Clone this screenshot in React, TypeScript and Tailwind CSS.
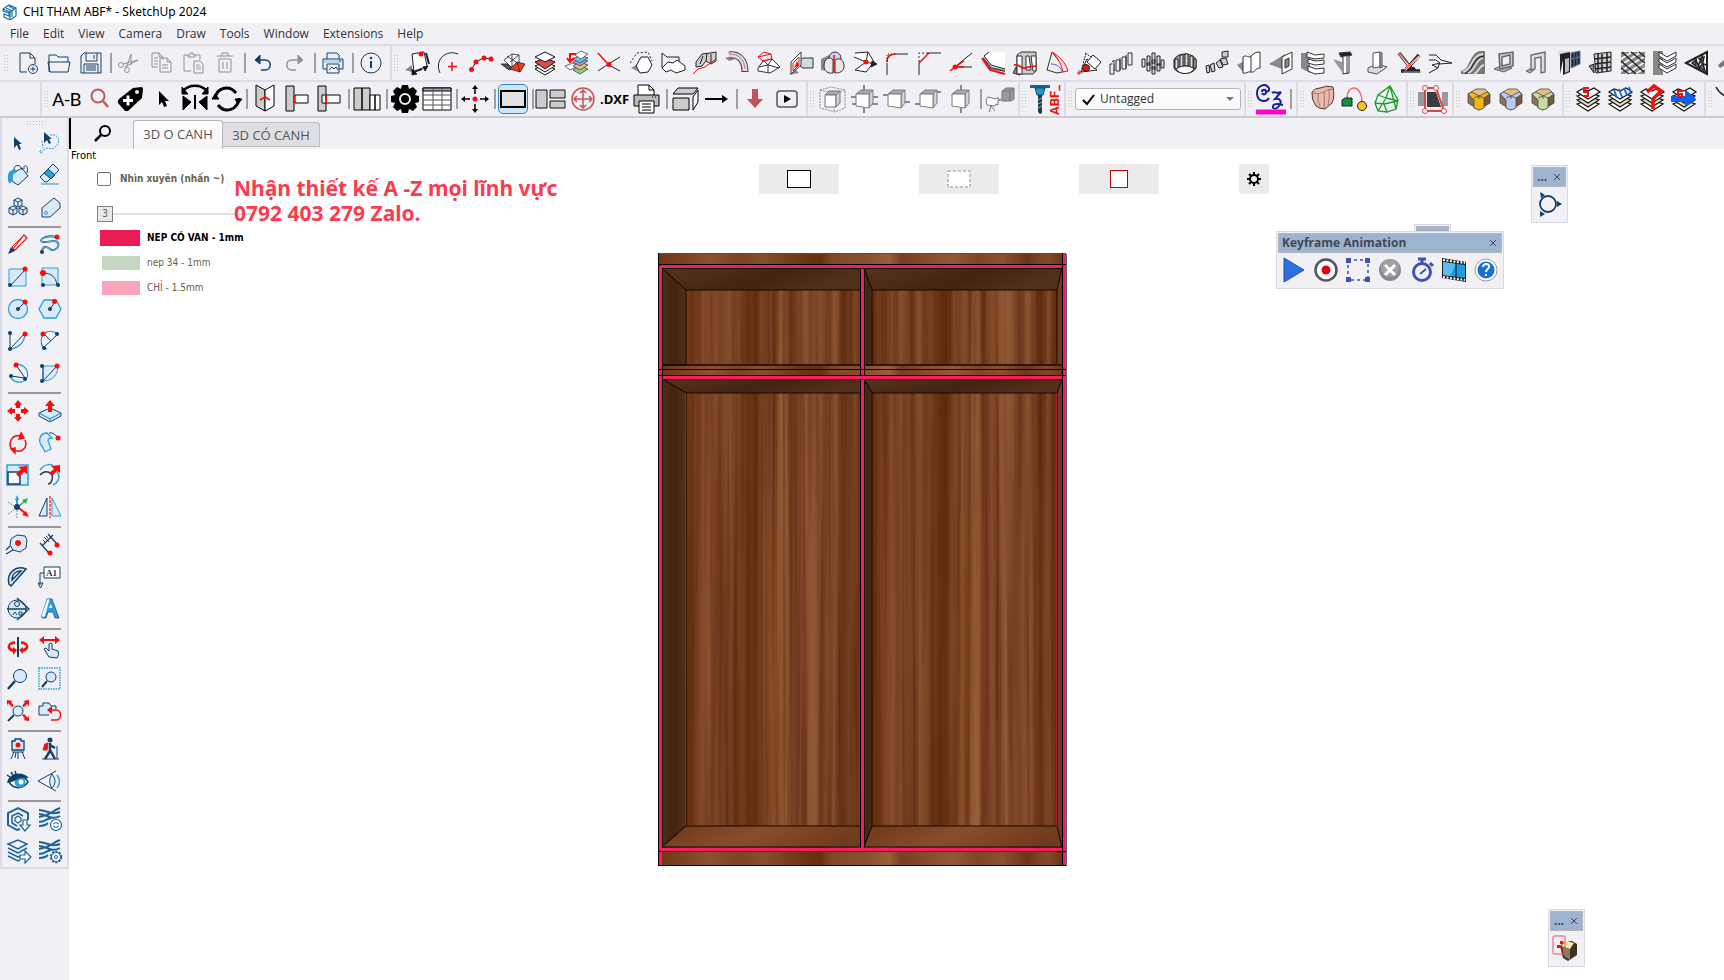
import { useState } from "react";
import type { ReactNode } from "react";

type Tool = { label: string; art: ReactNode };
// null stands for a separator line between tools
type Slot = Tool | null;

const NAVY = "#124068";
const CYAN = "#2a9fd8";
const PALE = "#d8eaf8";
const RED = "#f80c0c";
const GRAY = "#919196";

const MENUS = ["File", "Edit", "View", "Camera", "Draw", "Tools", "Window", "Extensions", "Help"];

/* ---------- small drawing helpers ---------- */

function Dot({ x, y, c = RED, r = 2.5 }: { x: number; y: number; c?: string; r?: number }) {
  return <circle cx={x} cy={y} r={r} fill={c} stroke="none" />;
}

function Cube({ lines }: { lines?: string }) {
  return (
    <g stroke="#7c7c80" strokeWidth="1">
      {lines ? <path d={lines} strokeWidth="2" stroke="#8a8a8e" /> : null}
      <path d="M6 10l5-4h12l-4 4z" fill="#aaaaad" />
      <path d="M19 10l4-4v13l-4 5z" fill="#d2d2d5" />
      <path d="M6 10h13v14l-13-2z" fill="#fff" />
    </g>
  );
}

function Block({ top }: { top: string }) {
  return (
    <g stroke="#4f4638" strokeWidth=".8">
      <path d="M4 10l11 5v11l-11-7z" fill="#8b7355" />
      <path d="M15 15l11-5v9l-11 7z" fill="#6f5c43" />
      <path d="M4 10l8-5h9l5 5-11 6z" fill="#e3bd8c" />
      <path d="M4 10l4-2 7 4 8-4 3 2-6 4v10l-5 2-5-2v-8z" fill={top} />
      <path d="M10 14l5-2 5 2M15 12v3" fill="none" />
    </g>
  );
}

function Stack({ children }: { children?: ReactNode }) {
  return (
    <g stroke="#111" strokeWidth="1.2" fill="#fff">
      <path d="M3 20l11-4 11 4-11 7z" />
      <path d="M3 16l11-4 11 4-11 7z" fill="#e3d9bd" />
      <path d="M3 12l11-4 11 4-11 7z" />
      <path d="M3 8l5-3 6 2 6-3 6 4-12 7z" />
      {children}
    </g>
  );
}

/* ---------- first toolbar row ---------- */

const FILE_TOOLS: Slot[] = [
  { label: "New", art: <g stroke={NAVY}><path d="M12 21H5V2h10l5 5v6M15 2v5h5" /><circle cx="18" cy="18" r="4.5" /><path d="M18 15.500v5M15.500 18h5" /></g> },
  { label: "Open", art: <g stroke={NAVY}><path d="M2 21V4h7l2 2h10v5M1 11h22l-2 10H3z" /></g> },
  { label: "Save", art: <g stroke={NAVY}><path d="M5 2h17v20H2V5zM7 2v8h11V2M15 4v4M5 22v-9h14v9M7 15h10M7 17h10M7 19h10" /></g> },
  null,
  { label: "Cut", art: <g stroke={GRAY}><circle cx="4" cy="14" r="2.500" /><circle cx="10" cy="19" r="2.500" /><path d="M6 13l15-4-13 7M9 17l5-14v11" /></g> },
  { label: "Copy", art: <g stroke={GRAY}><path d="M9 16H3V2h7l4 4v3M10 2v4h4M11 21V7h7l4 4v10zM18 7v4h4M5 7h4M5 10h4M5 13h4M13 14h6M13 17h6" /></g> },
  { label: "Paste", art: <g stroke={GRAY}><path d="M10 20H3V4h4M13 4h6v5M7 6V4h2V2h3v2h2v2zM13 22V10h6l3 3v9z" /><path d="M15 13h3l2 2v4h-5z" fill="#cbcbd2" stroke="none" /></g> },
  { label: "Delete", art: <g stroke={GRAY}><path d="M4 5h16M9 5V2h6v3M6 8h12v13H6zM10 11v7M14 11v7" /></g> },
  null,
  { label: "Undo", art: <g stroke={NAVY}><path d="M4 9h10c7 0 7 10 0 10h-4" strokeWidth="1.500" /><path d="M9 4L4 9l5 4z" fill={NAVY} /></g> },
  { label: "Redo", art: <g stroke={GRAY}><path d="M19 9H9C2 9 2 19 9 19h4" strokeWidth="1.500" /><path d="M15 4l5 5-5 4z" fill={GRAY} /></g> },
  null,
  { label: "Print", art: <g stroke={NAVY}><path d="M6 8V2h10l2 2v4M2 8h20v10h-4M6 18H2V8M6 13h12v9H6zM8 19l3-3 2 2 2-2 2 3" /><path d="M3 9h18v3H3z" fill="#b9d8ec" stroke="none" /><path d="M18 10h2" /></g> },
  null,
  { label: "Model Info", art: <g stroke={NAVY}><circle cx="12" cy="12" r="10" /><path d="M12 10v7" strokeWidth="2" /><Dot x={12} y={7} c={NAVY} r={1.300} /></g> },
];

const SHAPE_TOOLS: Slot[] = [
  { label: "Rotate face", art: <g stroke="#222"><path d="M0 19l7-5v7z" fill="#888" stroke="none" /><path d="M7 3l12-2 3 14-13 6z" fill="#fff" /><Dot x={16} y={3} /><path d="M21 2l3 11M8 21l9-3" strokeWidth="2" /><path d="M7 18l5 5-5 1zM18 16l5-1-3 5z" fill="#111" /></g> },
  { label: "Arc by center", art: <g stroke="#222"><path d="M21 3C9-2-3 9 3 22" /><path d="M15 11v9M11 15.500h9" stroke={RED} strokeWidth="1.500" /></g> },
  { label: "Polyline", art: <g stroke="#222"><path d="M2 19l5-8 7-4 9 1" /><Dot x={2.500} y={18.500} /><Dot x={7} y={11} /><Dot x={15} y={7} /><Dot x={22} y={8} /></g> },
  { label: "Unfold", art: <g stroke="#222" strokeWidth=".8"><path d="M3 9l8-6 7 1 0 9-8 3z" fill="#fff" /><path d="M6 5l12 8M18 4L9 11M11 3v12" /><path d="M0 13h7l5 5-4 1z" fill="#555" /><path d="M9 18l7-7 8 2-5 8z" fill="#f33a1e" /><path d="M16 11l3 10" /></g> },
  { label: "Layer stack", art: <g stroke="#111"><path d="M2 18l10-4 10 4-10 6z" fill="#fff" /><path d="M2 15l10-4 10 4-10 6z" fill="#fff" /><path d="M2 11l10-4 10 4-10 7z" fill="#e34848" /><path d="M2 6l10-5 10 5-10 5z" fill="#fff" /></g> },
  { label: "Color stack", art: <g stroke="#444" strokeWidth=".8"><path d="M0 15l8-3 5 3-8 4z" fill="#fff" /><path d="M8 19l7-4 8 3-8 5z" fill="#86d286" /><path d="M8 15l7-4 8 3-8 5z" fill="#f4b973" /><path d="M8 11l7-4 8 3-8 5z" fill="#b193e6" /><path d="M8 8l7-4 8 3-8 5z" fill="#62c8dd" /><path d="M10 4l6-4 7 3-7 5z" fill="#fff" /><path d="M11 3H5v7M2 7l3 4 4-4" stroke={RED} strokeWidth="2" /></g> },
  { label: "Intersect", art: <g stroke="#222"><path d="M1 20l9-6 13-8M12 14l11 6" /><path d="M1 2l10 11" stroke={RED} strokeWidth="1.500" /><Dot x={12} y={13.500} /></g> },
  { label: "Offset polygon", art: <g stroke="#222"><path d="M2 17l9 4-2-8z" fill="#888" stroke="none" /><path d="M12 6h7l4 8-4 7-8 1-4-7z" fill="#fff" /><path d="M1 12L8 2l11-1 4 9" strokeDasharray="2 2" /></g> },
  { label: "Sheet profile", art: <g stroke="#222"><path d="M1 17V2l5 4h12v5" /><path d="M1 17l6-6 5 1 4-3 8 6v4l-9 3-5-3-5 2z" fill="#fff" /></g> },
  { label: "Profile path", art: <g stroke="#222"><path d="M3 11l6-8 8-1 6-1v9l-5 3-5-3-4 5-6 1z" fill="#cfcfcf" /><path d="M7 13l3-8M13 10l1-8M18 12V3" /><path d="M0 23l5-5 7-2 11-8" stroke={RED} /></g> },
  { label: "Pipe bend", art: <g><path d="M0 7l7-2 3 3-6 2z" fill="#888" /><path d="M4 4c9-1 16 4 16 17" stroke="#444" strokeWidth="7" /><path d="M4 4c9-1 16 4 16 16" stroke="#ddd" strokeWidth="5" /><path d="M4 3c10 0 15 5 16 15" stroke="#c66ab0" /></g> },
  { label: "Dome", art: <g stroke="#333"><path d="M1 17l5-7 9-2 8 8-10 6-12-2z" fill="#fff" /><path d="M2 16l9-2 11 3M7 10l4 4 4-6M11 14v8" /><path d="M1 6l6-5 7 2 1 5-9 2zM1 6l13-3" stroke={RED} /></g> },
  { label: "Project to plane", art: <g stroke="#333"><path d="M0 24l6-6 4 4z" fill="#888" stroke="none" /><path d="M14 7h10v10H14l-3-2V9z" fill="#cfd9e2" /><path d="M2 11L12 1v13L2 23z" fill="#fff" /><path d="M4 12l6-6v8l-6 6z" stroke={RED} /><path d="M5 17l3-7 2 4z" fill={RED} stroke="none" /></g> },
  { label: "Sphere cut", art: <g stroke="#333"><path d="M0 19V8l8-4 6 17z" fill="#888" stroke="none" /><circle cx="14" cy="7" r="6" fill="#cdd3ea" /><path d="M3 15c0-8 6-10 9-6v13c-5 1-9-2-9-7zM14 22V9c5-3 9 0 9 6s-5 7-9 7z" fill="#e8e8e8" /><path d="M13 4v18" stroke={RED} strokeWidth="1.500" /></g> },
  { label: "Path solid", art: <g stroke="#222"><path d="M2 2l13-1 6 10-8 10-11-2 11-8L1 6" fill="#fff" /><path d="M15 1l-2 10 8 2" /><Dot x={13} y={11} /><path d="M19 10l5 3-6 3z" fill="#222" /></g> },
  { label: "Round corner", art: <g stroke="#222"><path d="M2 24V12M11 3h12" /><path d="M2 11c0-6 3-8 9-8" stroke={RED} strokeWidth="1.700" /><path d="M2 11V3h9" strokeDasharray="1 2" /></g> },
  { label: "Chamfer corner", art: <g stroke="#222"><path d="M2 24V12M11 2h13" /><path d="M2 12L12 2" stroke={RED} strokeWidth="1.500" /><path d="M2 11V2h9" strokeDasharray="2 2" /></g> },
  { label: "Angle trim", art: <g stroke="#222"><path d="M7 15l16-13M7 16h16" /><path d="M1 20l5-4 9-6M6 16h9" stroke={RED} strokeWidth="1.500" /><Dot x={6} y={16} /></g> },
  { label: "Edge sweep", art: <g stroke="#222"><path d="M8 1h16v17l-14-4-6-8z" fill="#fff" stroke="none" /><path d="M2 7l8 10 14 3" strokeWidth="2" stroke="#555" /><path d="M8 1L3 5l7 9 14 4" /><path d="M1 7l8 12 15 4" stroke={RED} strokeWidth="2" /></g> },
  { label: "Section band", art: <g stroke="#333"><path d="M0 22l3-6 4 8z" fill="#888" /><path d="M4 4l4-3h15v19l-3 3H4z" fill="#ccc" /><path d="M4 5h5v18H4zM13 5h3l2 14h-5zM18 5h5v15h-3z" fill="#fff" /><path d="M1 14c6-1 7 4 11 3s6-2 12-2" stroke={RED} strokeWidth="1.700" /></g> },
  { label: "Curved fin", art: <g stroke="#333"><path d="M2 19L7 1l15 19-10 2z" fill="#eee" /><path d="M7 1c7 7 9 12 11 20l5-1C20 11 15 6 7 1z" stroke={RED} fill="#f7e6e6" /><path d="M6 13c5 0 9 2 11 7" stroke="#4657e0" /></g> },
  { label: "Tilt face", art: <g stroke="#222"><path d="M4 21l6-13 10 11z" fill="#fff" /><path d="M8 2l16 10M4 21l5-19" strokeDasharray="2 1" /><path d="M10 11l6-7 8 7-6 7z" fill="#fff" /><circle cx="9" cy="17" r="3.500" fill={RED} /><path d="M2 19v5M0 22h5" stroke={RED} /></g> },
  { label: "Pillars", art: <g stroke="#333" fill="#eee"><path d="M1 13h4v10H1zM7 9h4v11H7zM13 6h4v12h-4zM19 2h4v12h-4z" /><path d="M3 11l2-2v11M11 7v12M17 4v13" /></g> },
  { label: "Pillar grid", art: <g stroke="#222" fill="#ddd"><path d="M1 8h3v8H1zM6 5h3v9H6zM11 2h3v10h-3zM16 5h3v9h-3zM6 12h3v8H6zM11 9h3v9h-3zM20 9h3v8h-3zM11 16h3v7h-3zM16 13h3v7h-3z" /></g> },
  { label: "Pillar ring", art: <g stroke="#222" fill="#ddd"><path d="M1 9C4 1 20 1 23 9v8c-3 7-19 7-22 0z" fill="#999" /><path d="M2 8h3v10H2zM7 4h3v12H7zM12 3h3v12h-3zM17 5h3v12h-3zM21 8h2v9h-2z" /><path d="M3 18c5-4 14-4 18 0-3 6-15 6-18 0z" fill="#fff" /></g> },
  { label: "Pillar path", art: <g stroke="#222" fill="#ccc"><path d="M1 15l3-1 1 7-3 1zM5 14l4-2 1 8-3 1zM11 12l4-3 3 7-4 1zM15 8l6-1 2 6-5 1zM17 1l6-1v6h-6z" /></g> },
  { label: "Bend sheet", art: <g stroke="#333"><path d="M0 14l7-4v12z" fill="#888" stroke="none" /><path d="M6 6c4-3 5 2 8-1s5-4 9-4v16c-5 0-5 5-9 4s-4 2-8 1z" fill="#fff" /><path d="M14 5v16" /></g> },
  { label: "Wall opening", art: <g stroke="#333"><path d="M0 13L16 3v16z" fill="#888" stroke="none" /><path d="M13 6l10-5v17l-10 5z" fill="#fff" /><path d="M16 9l4-2v8l-4 2z" fill="#888" /></g> },
  { label: "Louvers", art: <g stroke="#333"><path d="M0 2h9v20l-9-5z" fill="#888" stroke="none" /><path d="M6 1l8 3 9-1v4l-9 1-8-2zM7 8l8 2 8-1v4l-9 1-7-2zM7 15l8 3 8-1v5l-9 1-7-3z" fill="#fff" /></g> },
  { label: "Column", art: <g stroke="#333"><path d="M0 8l9 3v10z" fill="#999" stroke="none" /><path d="M6 2l11-1 2 3-11 2z" fill="#222" /><path d="M10 5h6v17l-6 1z" fill="#fff" /><path d="M14 6v16" /></g> },
  { label: "Post base", art: <g stroke="#555"><path d="M3 17l9-4 10 3-10 7-9-2z" fill="#ddd" /><path d="M8 2l7-1v15l-7 1z" fill="#fff" /><path d="M15 1l2 1v14l-2 1z" fill="#aaa" /></g> },
  { label: "Crossing beams", art: <g stroke="#222"><path d="M2 2l11 14q2 3 5 1M22 4L8 20M4 20h19" strokeWidth="3.500" /><path d="M2 2l11 14M22 5L8 19" strokeWidth="2" stroke="#fbeaea" /><path d="M2 2l13 15M22 4L8 19" stroke={RED} /><path d="M6 21h18" stroke="#999" /></g> },
  { label: "Notch line", art: <g stroke="#222"><path d="M0 4h7l5 5 11 3-13 1-1 4-9 5M0 9h7l4 3-8 2 6 3" strokeLinejoin="round" /></g> },
  { label: "Ramp", art: <g><path d="M0 20C10 18 8 1 20 0h4v23H0z" fill="#777" /><path d="M2 21C12 18 10 4 22 3M7 22c8-3 7-13 15-15M13 23c6-3 5-8 10-9" stroke="#ddd" strokeWidth="1.800" /><path d="M4 23C14 18 11 6 23 5" stroke="#222" /></g> },
  { label: "Frame", art: <g stroke="#666"><path d="M1 18l6-3 12 2-8 4z" fill="#aaa" /><path d="M6 3l14-2v14l-13 3z" fill="#ccc" strokeWidth="1.500" /><path d="M9 6l8-2v9l-8 2z" fill="#f0f0f5" strokeWidth="1.500" /></g> },
  { label: "Door frame", art: <g stroke="#666"><path d="M1 20l6-3 2 2-4 3z" fill="#aaa" /><path d="M6 19V4l14-3v20l-4 1V6L10 7v11z" fill="#ddd" strokeWidth="1.300" /></g> },
  { label: "Facade", art: <g><path d="M1 0h22v5H1z" fill="#ddd" /><path d="M3 3l10-2v20l-7 3V9L3 23z" fill="#222" /><path d="M8 8l4-1v13l-4 2z" fill="#bbb" /><path d="M14 2l9-2v13l-9 4zM14 8l9-2M17 2v13M20 2v12" stroke="#6a7c9c" fill="#1b2433" /></g> },
  { label: "Lattice window", art: <g stroke="#222"><path d="M0 15l5-2v9z" fill="#888" /><path d="M5 3l17-2v19l-15 2z" fill="#ccc" /><path d="M9 3v18M13 3v18M18 2v18M5 8l17-2M6 13l16-2M6 18l16-2" strokeWidth="1.500" /></g> },
  { label: "Diagonal mesh", art: <g><path d="M0 1h24v22H0z" fill="#888" /><path d="M0 8l11-7M0 14L20 1M0 20L24 5M5 23l19-12M14 23l10-6" stroke="#f8f8f8" strokeWidth="1.800" /><path d="M1 1l22 20M10 1l14 11M0 10l15 13M0 17l8 6M18 1l6 5" stroke="#222" strokeWidth="1.500" /></g> },
  { label: "Chevron slats", art: <g stroke="#333"><path d="M0 0h10v24H0z" fill="#888" stroke="none" /><path d="M6 1l8 5 9-5v4l-9 5-8-5zM6 7l8 5 9-5v4l-9 5-8-5zM6 13l8 5 9-5v4l-9 5-8-5z" fill="#fff" /></g> },
  { label: "Wedge lattice", art: <g stroke="#222" strokeWidth="1.500"><path d="M1 12L22 1v22z" fill="#fff" strokeWidth="2" /><path d="M7 12l4-3v6zM14 8l5-2-1 5zM14 16l4-3 2 7z" fill="#777" /><path d="M10 6l5 13M18 3l-6 15M15 11l8 4" /></g> },
  { label: "Roof", art: <g><path d="M1 14L14 3l10 8v12L10 13l-7 4z" fill="#777" /></g> },
];

/* ---------- second toolbar row, drawn on a 30 unit grid ---------- */

const ABF_TOOLS: Slot[] = [
  { label: "Label A-B", art: <text x="0" y="22" fontSize="19" fontFamily="Roboto, sans-serif" fill="#000">A-B</text> },
  { label: "Find", art: <g stroke="#c05558" strokeWidth="2"><circle cx="14" cy="12" r="6.500" /><path d="M19 17l5 6" strokeWidth="2.500" /></g> },
  { label: "Add tag", art: <g><path d="M3 15L17 4l9-1 1 2-1 9-14 13H9L2 19q-1-2 1-4z" fill="#000" /><circle cx="21" cy="8" r="2" fill="#f0f0f5" /><path d="M12 11.500v10M7 16.500h10" stroke="#fff" strokeWidth="3" /></g> },
  { label: "Select", art: <path d="M11 7v14l3-3 2 5 3-1-2-5h4z" fill="#000" /> },
  { label: "Mirror", art: <g stroke="#000"><path d="M3 7c6-7 18-7 24 0" strokeWidth="2.500" /><path d="M2 3v7h6zM28 3v7h-6z" fill="#000" /><path d="M15 11v14" strokeWidth="2" /><path d="M3 12l8 6-8 8zM27 12l-8 6 8 8z" fill="#000" /></g> },
  { label: "Rotate", art: <g stroke="#000" strokeWidth="3"><path d="M3 15C4 4 17 0 24 9M27 14C26 26 13 30 6 21" /><path d="M0 15h7l-4-5zM23 15h7l-4 5z" fill="#000" strokeWidth="1" /></g> },
  null,
  { label: "Fold panel", art: <g stroke="#000" strokeWidth="1"><path d="M6 1l9 5v21l-9-5z" fill="#ccc" /><path d="M24 1l-9 5v21l9-5z" fill="#fff" /><path d="M10 16l5-3 5 3" stroke={RED} strokeWidth="1.800" /></g> },
  { label: "Joint face", art: <g stroke="#000"><path d="M4 2h8v25H4z" fill="#ccc" /><path d="M13 11h13v8H13z" fill="#fff" /><path d="M12 11v8" stroke={RED} strokeWidth="2" /></g> },
  { label: "Joint groove", art: <g stroke="#000"><path d="M4 2h8v25H4z" fill="#ccc" /><path d="M8 11h18v8H8z" fill="#fff" /><path d="M12 11v8" stroke={RED} strokeWidth="2" /></g> },
  null,
  { label: "Panels", art: <g stroke="#000"><path d="M2 4h8v22H2zM10 4h8v22h-8z" fill="#ccc" /><path d="M18 11h5v15h-5zM23 11h5v15h-5z" fill="#fff" /></g> },
  null,
  { label: "Settings", art: <g><path d="M12 1h6l1 4 4-2 4 4-2 4 4 1v6l-4 1 2 4-4 4-4-2-1 4h-6l-1-4-4 2-4-4 2-4-4-1v-6l4-1-2-4 4-4 4 2z" fill="#000" /><circle cx="15" cy="15" r="5" stroke="#f0f0f5" strokeWidth="2" /></g> },
  { label: "Table", art: <g stroke="#000"><path d="M1 4h28v22H1z" fill="#fff" /><path d="M1 4h28v3H1z" fill="#aaa" /><path d="M1 11h28M1 16h28M1 21h28M11 4v22M20 4v22" stroke="#555" /></g> },
  null,
  { label: "Move origin", art: <g stroke="#000" strokeWidth="1.500"><path d="M15 10V3M15 20v7M10 15H2M20 15h8" /><path d="M12 5l3-4 3 4zM12 25l3 4 3-4zM5 12l-4 3 4 3zM25 12l4 3-4 3z" fill="#000" stroke="none" /><Dot x={15} y={15} /></g> },
  null,
  { label: "Face mode", art: <path d="M3 7h24v16H3z" stroke="#000" strokeWidth="2" fill="#e2e2e2" /> },
  null,
  { label: "Layout", art: <g stroke="#111" fill="#ccc"><path d="M0 6h11v18H0zM14 6h15v8H14zM14 17h15v7H14z" /></g> },
  { label: "Center", art: <g stroke="#c05558" strokeWidth="1.500"><circle cx="15" cy="15" r="11" /><path d="M15 6v18M6 15h18M12 9l3-3 3 3M12 21l3 3 3-3M9 12l-3 3 3 3M21 12l3 3-3 3" /></g> },
  { label: "Export DXF", art: <text x="0" y="20" fontSize="13" fontWeight="bold" fontFamily="Open Sans, sans-serif" fill="#000">.DXF</text> },
  { label: "Print sheets", art: <g stroke="#000"><path d="M6 11V1h11l5 5v5" fill="#fff" /><path d="M17 1v5h5" /><path d="M2 11h25v11H2z" fill="#bbb" /><path d="M7 17h15v12H7zM10 20h9M10 23h9M10 26h9" fill="#fff" /><path d="M20 13h1M23 13h1" /></g> },
  null,
  { label: "Box", art: <g stroke="#000"><path d="M3 10l5-6h20l-5 6z" fill="#ccc" /><path d="M3 14h16v12H3z" fill="#ccc" /><path d="M23 13l5-7v12l-5 8z" fill="#fff" /></g> },
  { label: "Direction", art: <g><path d="M3 15h18" stroke="#000" strokeWidth="2" /><path d="M20 11l6 4-6 4z" fill="#000" /></g> },
  null,
  { label: "Download", art: <path d="M12 5h6v10h5l-8 9-8-9h5z" fill="#bf5355" /> },
  { label: "Play", art: <g><rect x="5" y="7" width="20" height="16" rx="3" stroke="#555" strokeWidth="1.500" /><path d="M12 11v8l7-4z" fill="#000" /></g> },
];

const VIEW_TOOLS: Slot[] = [
  { label: "Axes box", art: <g><path d="M2 6l11-3 14 3v18l-10 4L2 24zM2 6l14 4 11-4M16 10v18" stroke="#8d8d92" strokeDasharray="2 1" /><g stroke="#77777b"><path d="M7 11l4-4h11l-4 4z" fill="#aaa" /><path d="M7 11h11v12H7z" fill="#fff" /><path d="M18 11l4-4v12l-4 4z" fill="#d0d0d3" /></g></g> },
  { label: "Cube axes", art: <Cube lines="M14 1v28M1 13h27M2 20h26" /> },
  { label: "Cube width", art: <Cube lines="M1 11h10M18 18h10" /> },
  { label: "Cube depth", art: <Cube lines="M1 20h14M22 8h5" /> },
  { label: "Cube height", art: <Cube lines="M15 1v28" /> },
  null,
  { label: "Camera view", art: <g stroke="#77777b"><path d="M2 16l2-3 8 2 2-2v8l-2-1-1 2-8-1zM7 22l-2 6M7 22l4 5" fill="#fff" /><path d="M15 16l6-2" strokeDasharray="2 1" strokeWidth="2" /><path d="M18 7l4-3h8v11l-3 2h-9z" fill="#9a9a9d" /><path d="M18 7h8v10M26 7l4-3" /></g> },
];

const ABF_LOGO: Slot[] = [
  {
    label: "ABF",
    art: (
      <g>
        <path d="M0 1h20v3H0z" fill="#16648c" />
        <path d="M5 4h10l-2 7H7z" fill="#1e96cf" stroke="#0f4460" />
        <path d="M8 11h4v18l-2 1-2-2z" fill="#223b49" />
        <path d="M8 16l4-2M8 20l4-2M8 24l4-2" stroke="#aaa" />
        <text transform="translate(29 31) rotate(-90)" fontSize="13" fontWeight="bold" fontFamily="Roboto, sans-serif" fill="#f80c0c">ABF_</text>
      </g>
    ),
  },
];

const CZ_TOOLS: Slot[] = [
  {
    label: "Curvizard",
    art: (
      <g stroke="#1b1f94" strokeWidth="2">
        <path d="M13 4C9-2 1 2 1 9c0 9 9 10 12 5M13 4c1 4-4 5-4 1M6 8c0-3 4-3 4 0s-3 3-4 1" />
        <path d="M16 9c2-2 5 1 9-1l-6 7c6-1 7 3 4 7s-7 3-6 0 6-2 10-1" />
        <path d="M0 28h30" stroke="#fb06c4" strokeWidth="5" />
      </g>
    ),
  },
  null,
];

const SOAP_TOOLS: Slot[] = [
  { label: "Skin", art: <g stroke="#4c3530"><path d="M4 8q3-4 8-4 7-3 13-1 2 10-1 16l-7 6q-6 0-9-3-5-7-4-14z" fill="#eab9ac" /><path d="M5 9q5 2 11-1 4-3 9-3M10 9q-1 7 2 14M16 8q1 8 0 16M21 5q1 9-1 16" stroke="#a5766c" /></g> },
  { label: "Path skin", art: <g stroke="#222"><path d="M7 14C7 0 22 0 22 18" stroke="#f26862" strokeWidth="1.500" /><path d="M2 16l3-2h7v8H2z" fill="#0f9048" /><circle cx="22" cy="22" r="4.500" fill="#fdc516" /></g> },
  { label: "Wire bubble", art: <g stroke="#16a02b" strokeWidth="1.300"><path d="M3 19L6 11l12-9 8 14-2 9-9 3-9-1zM6 11l8 3 4-12M14 14l-8 13M14 14l12 3M3 19l9 1 14-3M12 20l3 8M18 2l6 23" /></g> },
];

const TAPER_TOOLS: Slot[] = [
  { label: "Taper", art: <g><path d="M0 8h6v14H0zM24 8h6v14h-6z" fill="#999" /><path d="M9 8h9l5 15H9z" fill="#3c3c3f" /><path d="M7 4h11l8 23H7z" stroke="#dc4545" strokeWidth="2" /><g fill="#fff" stroke="#dc4545"><circle cx="7" cy="4" r="2.500" /><circle cx="18" cy="4" r="2.500" /><circle cx="7" cy="27" r="2.500" /><circle cx="26" cy="27" r="2.500" /></g></g> },
];

const CORNER_TOOLS: Slot[] = [
  { label: "Round corners", art: <Block top="#f4b815" /> },
  { label: "Sharp corners", art: <Block top="#b9c9fb" /> },
  { label: "Bevel corners", art: <Block top="#c5dda3" /> },
];

const SECTION_TOOLS: Slot[] = [
  { label: "Slice", art: <Stack><path d="M15 4h-5v4h4v4h-4" stroke={RED} strokeWidth="2" fill="none" /></Stack> },
  { label: "Slice lines", art: <Stack><path d="M8 6l3 8M13 5l3 8M18 4l3 7M23 3l2 7" stroke="#1e6ee0" strokeWidth="2" /></Stack> },
  { label: "Slice help", art: <Stack><path d="M9 8l7-6 7 5-8 8v10" stroke={RED} strokeWidth="3.500" fill="none" /></Stack> },
  { label: "Slice next", art: <Stack><path d="M1 12h14V5l11 10-11 9v-6H1z" fill="#0a62f5" stroke="none" /><path d="M13 7H8v3h4v3H8" stroke={RED} strokeWidth="2" fill="none" /></Stack> },
];

const LAST_TOOLS: Slot[] = [
  { label: "Line", art: <path d="M0 3c2 4 5 7 9 9" stroke="#222" strokeWidth="1.500" /> },
];

/* ---------- left palette, two columns ---------- */

const PALETTE: Tool[][] = [
  [
    { label: "Select", art: <path d="M8 6v11l3-3 2 5 2-1-2-5h3z" fill={NAVY} /> },
    { label: "Lasso", art: <g><path d="M12 4c9-2 12 8 4 13-3 2-6-1-9 1-4 2-3 4-3 4M3 19q-3 3 1 3M4 10l1 7" stroke={CYAN} strokeDasharray="2 1" /><path d="M6 1v11l3-3 2 4 2-1-2-4h3z" fill={NAVY} /></g> },
    { label: "Paint", art: <g stroke={NAVY}><path d="M6 11l10-6 6 8-10 9-6-4z" fill={PALE} /><path d="M8 7c0-7 8-5 8 0M18 6c-1-5 5-5 3 4" /><path d="M2 16c-1-8 4-10 9-9l-4 5-2 8q-3 1-3-4z" fill={CYAN} stroke="none" /></g> },
    { label: "Eraser", art: <g stroke={NAVY}><path d="M2 14L15 1l6 6L9 19H7z" fill={PALE} /><path d="M6 10l4-4 7 6-4 4z" fill={CYAN} /><path d="M3 21h18" stroke="#7cc4ea" strokeWidth="2" /></g> },
    { label: "Components", art: <g stroke={NAVY}><path d="M12 3l4 2v5l-4 2-4-2V5zM8 5l4 2 4-2M12 7v5M7 11l4 2v5l-4 2-4-2v-5zM3 13l4 2 4-2M7 15v5M17 11l4 2v5l-4 2-4-2v-5zM13 13l4 2 4-2M17 15v5" fill={PALE} /></g> },
    { label: "Tag", art: <g stroke={NAVY}><path d="M4 13L16 3l6 5v5L12 22H4z" fill={PALE} /><circle cx="8" cy="18" r="1.500" stroke={CYAN} /></g> },
  ],
  [
    { label: "Line", art: <g><path d="M6 14L18 2l3 3L9 17z" fill="#fff" stroke={RED} /><path d="M18 2l3 3L9 17l-2-1z" stroke={RED} strokeWidth="1.200" /><path d="M2 21l3-7 4 4z" fill={NAVY} /></g> },
    { label: "Freehand", art: <g><path d="M19 4C5 1-1 9 6 9s12-3 14 1-4 9-8 6-7-3-8 2" stroke={NAVY} strokeWidth="1.800" /><path d="M19 4C5 1-1 9 6 9s12-3 14 1-4 9-8 6-7-3-8 2" stroke="#5bb5e4" strokeWidth="1.200" /><Dot x={19} y={4} /><Dot x={4} y={19} c={NAVY} r={2} /></g> },
    { label: "Rectangle", art: <g><path d="M3 4h17v17H3z" fill={PALE} stroke={CYAN} /><path d="M4 21L20 4" stroke={NAVY} /><Dot x={19} y={4} /><Dot x={4} y={20} c={NAVY} r={2} /></g> },
    { label: "Rotated rectangle", art: <g><path d="M4 3h16v17H4z" fill={PALE} stroke={CYAN} /><path d="M5 8c8 0 13 4 14 12" stroke={NAVY} /><Dot x={5} y={8} r={3} /><Dot x={5} y={20} c={NAVY} r={2} /><Dot x={20} y={20} c={NAVY} r={2} /></g> },
    { label: "Circle", art: <g><circle cx="12" cy="12" r="9.500" fill={PALE} stroke={CYAN} strokeWidth="1.300" /><path d="M12 12l7-7" stroke={NAVY} /><Dot x={19} y={5} /><Dot x={12} y={12} c={NAVY} r={2} /></g> },
    { label: "Polygon", art: <g><path d="M6 3h12l5 9-5 9H6l-5-9z" fill={PALE} stroke={CYAN} strokeWidth="1.300" /><path d="M12 12l5-7" stroke={NAVY} /><Dot x={16.500} y={4.500} /><Dot x={12} y={12} c={NAVY} r={2} /></g> },
    { label: "Arc", art: <g><path d="M19 4c0 9-6 15-15 16" stroke={CYAN} strokeWidth="1.300" /><path d="M4 4v16L19 4" stroke={NAVY} /><Dot x={19} y={5} /><Dot x={4} y={4} c={NAVY} r={2} /><Dot x={4} y={20} c={NAVY} r={2} /></g> },
    { label: "2 point arc", art: <g><path d="M5 19C-1 6 10-2 20 5M5 19l4 1" stroke={CYAN} strokeWidth="1.300" /><path d="M5 19L20 5M6 5l7 7" stroke={NAVY} /><Dot x={5} y={5} /><Dot x={19} y={5} c={NAVY} r={2} /><Dot x={6} y={19} c={NAVY} r={2} /></g> },
    { label: "3 point arc", art: <g><path d="M10 3c14 0 15 17 5 18q-6 1-10-4" stroke={CYAN} strokeWidth="1.300" /><path d="M10 4l9 13L5 15" stroke={NAVY} /><Dot x={10} y={4} /><Dot x={5} y={15} c={NAVY} r={2} /><Dot x={19} y={18} c={NAVY} r={2} /></g> },
    { label: "Pie", art: <g><path d="M5 5h15c0 9-6 15-15 15z" fill={PALE} stroke={CYAN} /><path d="M5 4v16L19 5" stroke={NAVY} /><Dot x={19} y={5} /><Dot x={4} y={5} c={NAVY} r={2} /><Dot x={4} y={20} c={NAVY} r={2} /></g> },
  ],
  [
    { label: "Move", art: <g fill={RED}><path d="M12 1l4 5h-2v3h-4V6H8zM12 23l4-5h-2v-3h-4v3H8zM1 12l5-4v2h3v4H6v2zM23 12l-5-4v2h-3v4h3v2z" /></g> },
    { label: "Push/Pull", art: <g><path d="M1 14l11-5 11 5v3l-11 6-11-6z" fill={PALE} stroke={NAVY} /><path d="M1 14l11 6 11-6M12 20v3" stroke={CYAN} strokeWidth="1.300" /><path d="M12 1l5 6h-3v6h-4V7H7z" fill={RED} /></g> },
    { label: "Rotate", art: <g stroke={RED} strokeWidth="1.500"><path d="M5 17C2 10 7 3 16 5M19 9c3 7-3 14-11 10" /><path d="M15 2l3 5-5 1zM9 17l-4 1 4 4z" fill={RED} /></g> },
    { label: "Follow Me", art: <g><path d="M9 2c-8 0-9 9-5 13l3 6 6-3-2-6c-2-3-1-5 3-5z" fill={PALE} stroke={CYAN} strokeWidth="1.300" /><path d="M11 2c5-1 6 3 9 4" stroke={NAVY} /><Dot x={20} y={7} /></g> },
    { label: "Scale", art: <g><path d="M1 2h21v20H1z" fill={PALE} stroke={CYAN} strokeWidth="1.500" /><path d="M2 9h12v12H2z" fill="#f6f9fd" stroke={NAVY} strokeWidth="1.500" /><path d="M21 3v8l-3-2-5 5-3-3 5-5-3-2z" fill={RED} /></g> },
    { label: "Offset", art: <g><path d="M2 7C7 0 14 1 15 3M19 9c5 6-1 12-4 13" stroke={CYAN} strokeWidth="1.500" /><path d="M2 12c5-6 15-3 12 5-1 3-2 4-4 4" stroke={NAVY} strokeWidth="1.500" /><path d="M22 2v8l-3-2-5 5-3-3 5-4-3-3z" fill={RED} /></g> },
    { label: "Axes", art: <g><path d="M11 12V3" stroke="#2a9fd8" strokeWidth="2" /><path d="M13 11l6-5" stroke="#3aa75a" strokeWidth="1.500" /><path d="M11 0l2 5h-4z" fill={CYAN} /><path d="M22 3l-2 6-4-4z" fill="#3aa75a" /><path d="M13 13l6 5" stroke={RED} strokeWidth="2" /><path d="M23 22l-7-2 4-4z" fill={RED} /><path d="M2 7l6 4M11 15v8M2 19l6-4" stroke="#5a8" strokeDasharray="2 1" /><Dot x={11} y={12} c={NAVY} r={3} /></g> },
    { label: "Flip", art: <g><path d="M9 3v18H1z" fill={PALE} stroke={NAVY} /><path d="M14 3v18h9z" fill={PALE} stroke={CYAN} /><path d="M12 1v22" stroke="#f56a6a" strokeWidth="2" strokeDasharray="3 1" /></g> },
  ],
  [
    { label: "Tape measure", art: <g stroke={NAVY}><path d="M5 6l6-4 8 1 2 4-1 8-6 4-7-2-3-5z" fill={PALE} /><circle cx="12" cy="10" r="4" fill="#fff" stroke="none" /><Dot x={12} y={10} r={3} /><path d="M7 17l-7 4M4 13L0 17" strokeWidth="1.200" /></g> },
    { label: "Dimension", art: <g stroke={NAVY}><path d="M2 10l9 10M4 13L15 2M10 1l9 10" strokeWidth="1.300" /><path d="M6 4l5 5M8 3l2 2M5 7l2 2" /><Dot x={12} y={20} /><Dot x={19} y={12} /></g> },
    { label: "Protractor", art: <g stroke={NAVY} strokeWidth="1.500"><path d="M3 19C0 8 10 0 20 4L5 21z" fill={PALE} /><path d="M6 15c0-6 4-9 9-9z" fill="#fff" /></g> },
    { label: "Text", art: <g><path d="M6 2h16v11H6z" fill="#fff" stroke={NAVY} /><text x="8" y="11" fontSize="9" fontFamily="Liberation Serif, serif" fill={NAVY} fontWeight="bold">A1</text><path d="M6 8H2v12M0 18l2.500 5L5 18z" stroke={NAVY} fill="none" /></g> },
    { label: "Section plane", art: <g stroke={NAVY}><circle cx="11" cy="12" r="9" fill={PALE} /><path d="M1 12h20M11 1l12 11-12 11" strokeWidth="1.300" /><circle cx="11" cy="7" r="2.500" /><path d="M7 18l2-3 2 3M13 15v3h3v-3z" /></g> },
    { label: "3D text", art: <g><path d="M4 21L9 2h5l7 19h-4l-2-6h-5l-2 6z" fill={CYAN} stroke={NAVY} strokeWidth=".7" /><path d="M3 20L9 2h3L7 20z" fill="#fff" stroke={CYAN} strokeWidth=".7" /><path d="M11 11h3l-1-4z" fill="#fff" /></g> },
  ],
  [
    { label: "Orbit", art: <g><path d="M9 6C0 7-1 15 7 17v-3q-7-4 2-5zM15 6c9 1 10 9 2 11v-3q7-4-2-5z" fill={RED} /><path d="M7 12l4 3-4 5zM17 12l-4 3 4 4z" fill={RED} /><path d="M12 2v20" stroke={NAVY} strokeWidth="2" /></g> },
    { label: "Pan", art: <g><path d="M11 22l-5-8 2-1 3 3V9q2-2 3 0v5l6 2q2 3-1 7z" fill={PALE} stroke={NAVY} /><path d="M1 5l5-4v3h11V1l5 4-5 4V6H6v3z" fill={RED} /></g> },
    { label: "Zoom", art: <g stroke={NAVY}><circle cx="14" cy="9" r="6.500" fill={PALE} /><path d="M9 14l-7 8" strokeWidth="2.500" /></g> },
    { label: "Zoom window", art: <g stroke={NAVY}><path d="M1 1h21v21H1z" stroke={CYAN} strokeDasharray="1.500 1" strokeWidth="1.500" /><circle cx="13" cy="10" r="5" fill={PALE} /><path d="M9 14l-5 6" strokeWidth="2" /></g> },
    { label: "Zoom extents", art: <g stroke={NAVY}><circle cx="12" cy="12" r="5" fill={PALE} /><path d="M8 16l-6 6" strokeWidth="2" /><path d="M1 1l6 1-2 1 3 4-2 1-4-4-1 3zM23 1l-6 1 2 1-3 4 2 1 3-3 2 2zM23 22l-6-1 2-1-3-4 2-1 4 4 1-3z" fill={RED} stroke="none" /></g> },
    { label: "Previous view", art: <g><path d="M11 16H1V7h4V4h6l2 3h5v3" stroke={NAVY} fill={PALE} /><path d="M12 11h6c6 0 6 10 0 10h-5" stroke={RED} strokeWidth="1.500" /><path d="M14 7l-5 4 5 4z" fill={RED} /></g> },
  ],
  [
    { label: "Position camera", art: <g stroke={NAVY}><path d="M6 4h3V2h6v2h3v9H6z" fill={PALE} strokeWidth="1.300" /><Dot x={12} y={8} /><path d="M6 15h12M8 15L5 22M12 15v7M16 15l3 7M10 15l-1 6" /></g> },
    { label: "Walk", art: <g stroke={NAVY}><Dot x={12} y={3} c={NAVY} r={2.500} /><path d="M12 6v8l-5 8M12 13l5 9M12 8l5 3" strokeWidth="2.500" /><path d="M10 6l-3 1-2 6h4z" fill={RED} stroke={RED} /><path d="M19 9v13M4 22h17" /></g> },
    { label: "Look around", art: <g><path d="M3 13c5-8 15-8 19 0-5 7-14 8-19 0z" fill="#fff" stroke={NAVY} strokeWidth="1.500" /><circle cx="14" cy="13" r="5.500" fill={CYAN} /><circle cx="15" cy="13" r="2.500" fill="#fff" /><path d="M1 14C3 3 17 2 23 9q-9-1-13 2-5 3-9 3z" fill={NAVY} /><path d="M4 8L1 6M7 6L5 3M10 5L9 2" stroke={NAVY} strokeWidth="1.500" /></g> },
    { label: "Field of view", art: <g stroke={NAVY}><path d="M18 2L0 12l18 10M14 5c-3 5-3 10 0 14" /><path d="M14 5c4 5 4 10 0 14" fill={PALE} /><path d="M19 6c3 4 3 9 0 13" stroke={CYAN} strokeWidth="1.500" /></g> },
  ],
  [
    { label: "Warehouse", art: <g stroke="#1c639a" strokeWidth="2"><path d="M14 22l-3 1-9-5V6l10-5 10 5v7" /><path d="M17 9l-5-3-6 3v7l5 3" strokeWidth="1.500" /><path d="M12 9l3 2v3l-3 2-3-2v-3z" strokeWidth="1.200" /><path d="M17 13h4v5h3l-5 6-5-6h3z" fill="#fff" strokeWidth="1.200" /></g> },
    { label: "Extension warehouse", art: <g stroke="#1c639a" strokeWidth="2"><path d="M1 3c8 0 12 6 21 2M1 7c8 0 12 7 21 2M22 1c-9 3-10 8-21 9M1 15c6 0 7-3 12-4M1 19c5 0 7-1 9-3" /><circle cx="18" cy="18" r="5.500" fill="#fff" strokeWidth="1.200" /><path d="M15 17q3-3 6 0M21 19q-3 3-6 0" strokeWidth="1" /></g> },
    { label: "Share", art: <g stroke="#1c639a" strokeWidth="1.500"><path d="M2 5l10-4 9 4-9 5zM2 9l10 5 9-5M2 13l10 5 3-1M2 17l10 5 2-1" /><path d="M14 16h5v-4l6 6-6 6v-4h-5z" fill="#fff" strokeWidth="1.200" /></g> },
    { label: "Extension manager", art: <g stroke="#1c639a" strokeWidth="2"><path d="M1 3c8 0 12 6 21 2M1 7c8 0 12 7 21 2M22 1c-9 3-10 8-21 9M1 15c6 0 7-3 12-4M1 19c5 0 7-1 9-3" /><circle cx="18" cy="18" r="5" fill="#fff" strokeDasharray="2 1.200" strokeWidth="2.500" /><circle cx="18" cy="18" r="4.500" fill="#fff" strokeWidth="1" /><circle cx="18" cy="18" r="1.500" strokeWidth="1" /></g> },
  ],
];

const KEYFRAME_TOOLS: Tool[] = [
  { label: "Play", art: <path d="M2 0l20 12L2 24z" fill="#2e6fe0" stroke="#1c4fb0" /> },
  { label: "Record", art: <g><circle cx="12" cy="12" r="10.500" fill="#fff" stroke="#555" strokeWidth="2.500" /><Dot x={12} y={12} c="#e60012" r={4.500} /></g> },
  { label: "Select frame", art: <g stroke="#3f51b5"><path d="M2 2h20v20H2z" strokeDasharray="3 3" strokeWidth="1.500" /><path d="M0 0h5v5H0zM19 0h5v5h-5zM0 19h5v5H0zM19 19h5v5h-5z" fill="#3f51b5" stroke="none" /></g> },
  { label: "Clear", art: <g><circle cx="12" cy="12" r="11" fill="#8b8b8b" /><circle cx="12" cy="10" r="9" fill="#a2a2a2" /><path d="M7 7l10 10M17 7L7 17" stroke="#fff" strokeWidth="3" /></g> },
  { label: "Timing", art: <g stroke="#3f51b5" strokeWidth="3"><circle cx="12" cy="14" r="8.500" /><path d="M8 1h8M12 1v4M20 5l3 3" /><path d="M10 16l6-5" strokeWidth="2" /></g> },
  { label: "Export film", art: <g><path d="M0 0l24 4v20L0 20z" fill="#222" /><path d="M1 4l22 3v13L1 17z" fill="#219adf" /><path d="M1 4l13 2-6 12-7-1z" fill="#5abcf0" /><path d="M14 5v14M1 2l22 3M1 19l22 3" stroke="#111" /><path d="M1 2l22 3M1 19l22 3" stroke="#fff" strokeWidth="2" strokeDasharray="2 1.500" /></g> },
  { label: "Help", art: <g><circle cx="12" cy="12" r="11" fill="#fff" stroke="#999" /><circle cx="12" cy="12" r="8.500" fill="#1673d2" /><path d="M9 9c0-4 7-4 6 0 0 2-3 2-3 5M12 16v2" stroke="#fff" strokeWidth="2" /></g> },
];

const LAYERS = [
  { name: "NEP CÓ VAN - 1mm", swatch: "h-4 w-10 bg-[#eb1b56]", text: "font-bold text-black" },
  { name: "nep 34 - 1mm", swatch: "ml-[2px] h-[14px] w-[38px] bg-[#c5d7c0]", text: "text-[#66614e]" },
  { name: "CHỈ - 1.5mm", swatch: "ml-[2px] h-[14px] w-[38px] bg-[#f9a5bb]", text: "text-[#66614e]" },
];

export default function App() {
  return (
    <div className="flex min-h-screen flex-col overflow-hidden bg-[#f1f0f5] font-['Open_Sans',sans-serif] text-black">
      <header>
        <div className="flex h-[23px] items-center gap-[5px] bg-white pl-[2px]">
          <Logo />
          <h1 className="font-['Noto_Sans',sans-serif] text-[12px] leading-4">CHI THAM ABF* - SketchUp 2024</h1>
        </div>
        <nav className="flex h-[21px] items-center gap-[14px] pl-[10px] text-[12px] leading-4 text-[#333]">
          {MENUS.map((menu) => (
            <button key={menu} type="button">
              {menu}
            </button>
          ))}
        </nav>
        <div className="flex h-[38px] overflow-hidden border-y-2 border-[#dddce6]">
          <ToolGroup tools={FILE_TOOLS} size={24} first />
          <ToolGroup tools={SHAPE_TOOLS} size={24} />
        </div>
        <div className="flex h-9 overflow-hidden border-b-2 border-[#cccbd2] pl-[40px]">
          <ToolGroup tools={ABF_TOOLS} size={30} />
          <ToolGroup tools={VIEW_TOOLS} size={30} />
          <ToolGroup tools={ABF_LOGO} size={30} />
          <TagPicker />
          <ToolGroup tools={CZ_TOOLS} size={30} />
          <ToolGroup tools={SOAP_TOOLS} size={30} />
          <ToolGroup tools={TAPER_TOOLS} size={30} />
          <ToolGroup tools={CORNER_TOOLS} size={30} />
          <ToolGroup tools={SECTION_TOOLS} size={30} />
          <ToolGroup tools={LAST_TOOLS} size={30} />
        </div>
      </header>
      <div className="flex flex-1">
        <Palette />
        <div className="flex min-w-0 flex-1 flex-col">
          <SceneTabs />
          <Viewport />
        </div>
      </div>
    </div>
  );
}

function Logo() {
  return (
    <svg viewBox="0 0 16 16" className="h-4 w-4" fill="none" stroke="#1d76ae" strokeWidth="1.3" aria-hidden>
      <path d="M1 5l6-4 7 3v8l-6 4-6-3v-3l5 2V9L1 7zM1 5l7 3 6-4M4 4l6 3v6M7 2l5 3M8 8v7" />
    </svg>
  );
}

function Icon({ size, children }: { size: number; children: ReactNode }) {
  return (
    <svg
      width={size}
      height={size}
      viewBox={`0 0 ${size} ${size}`}
      fill="none"
      className="shrink-0 overflow-visible"
      aria-hidden
    >
      {children}
    </svg>
  );
}

function Grip() {
  return (
    <svg width="6" height="16" className="shrink-0" fill="#c0c0c8" aria-hidden>
      {[0, 3, 6, 9, 12, 15].map((y) => (
        <path key={y} d={`M0 ${y}h1v1h-1zM3 ${y}h1v1h-1z`} />
      ))}
    </svg>
  );
}

function ToolGroup({ tools, size, first }: { tools: Slot[]; size: number; first?: boolean }) {
  return (
    <div
      role="toolbar"
      className={`flex shrink-0 items-center pr-[3px] ${first ? "pl-[2px]" : "border-l-2 border-[#dddce6]"}`}
    >
      <span className="flex w-[9px] justify-center">
        <Grip />
      </span>
      {tools.map((tool, i) =>
        tool ? (
          <button
            key={i}
            type="button"
            aria-label={tool.label}
            title={tool.label}
            className={`flex items-center justify-center ${
              tool.label === "Face mode"
                ? "mx-px h-[30px] w-[30px] rounded-[5px] border border-[#2b86bd] bg-[#cfe6f7]"
                : "h-8 w-8"
            }`}
          >
            <Icon size={size}>{tool.art}</Icon>
          </button>
        ) : (
          <span key={i} className="ml-[3px] mr-px h-5 w-[2px] bg-[#a0a0a2]" />
        )
      )}
    </div>
  );
}

function TagPicker() {
  return (
    <div className="flex shrink-0 items-center border-l-2 border-[#dddce6] pr-[3px]">
      <span className="flex w-[9px] justify-center">
        <Grip />
      </span>
      <div className="relative">
        <select
          aria-label="Tag"
          className="block h-[22px] w-[166px] appearance-none rounded-[3px] border border-[#b4b4ba] bg-linear-to-b from-white to-[#f8f8fa] pl-6 text-[12px] leading-4 text-[#333]"
        >
          <option>Untagged</option>
        </select>
        <svg viewBox="0 0 166 22" className="pointer-events-none absolute inset-0" fill="none" aria-hidden>
          <path d="M8 12l4 4 7-9" stroke="#000" strokeWidth="2" />
          <path d="M151 9h8l-4 4z" fill="#77777b" />
        </svg>
      </div>
    </div>
  );
}

function Palette() {
  return (
    <aside className="w-[69px] shrink-0">
      <div className="border-2 border-t-0 border-[#dddce6]">
        <div className="flex h-[9px] items-center justify-center">
          <svg width="16" height="4" fill="#b8b8c0" aria-hidden>
            {[0, 3, 6, 9, 12, 15].map((x) => (
              <path key={x} d={`M${x} 0h1v1h-1zM${x} 3h1v1h-1z`} />
            ))}
          </svg>
        </div>
        {PALETTE.map((section, i) => (
          <div key={i}>
            {i > 0 ? <div className="mx-[6px] mb-px mt-[3px] h-[2px] bg-[#98979a]" /> : null}
            <div className="grid w-16 grid-cols-2">
              {section.map((tool) => (
                <button
                  key={tool.label}
                  type="button"
                  aria-label={tool.label}
                  title={tool.label}
                  className="flex h-8 items-center justify-center"
                >
                  <Icon size={24}>{tool.art}</Icon>
                </button>
              ))}
            </div>
          </div>
        ))}
      </div>
    </aside>
  );
}

function SceneTabs() {
  return (
    <div className="flex h-[31px] items-start border-l-2 border-black text-[13px] leading-4 text-[#55555a]">
      <button type="button" aria-label="Search scenes" className="mr-5 flex h-[31px] w-[42px] items-center justify-end">
        <svg width="20" height="20" fill="none" stroke="#000" strokeWidth="2" aria-hidden>
          <circle cx="12" cy="7" r="5" />
          <path d="M8 11l-6 6" strokeWidth="2.500" />
        </svg>
      </button>
      <button
        type="button"
        className="mt-[2px] h-[29px] w-[90px] rounded-t-[3px] border border-b-0 border-[#b6b6bc] bg-linear-to-b from-white to-[#f6f6fa] pb-[2px]"
      >
        3D O CANH
      </button>
      <button
        type="button"
        className="mt-[4px] h-[25px] w-[97px] rounded-tr-[3px] border border-l-0 border-[#bcbcc2] bg-[#dfdee3]"
      >
        3D CÓ CANH
      </button>
    </div>
  );
}

function Viewport() {
  return (
    <main className="relative flex-1 overflow-hidden bg-white">
      <p className="pl-[2px] font-['DejaVu_Sans',sans-serif] text-[10px] leading-[14px]">Front</p>
      <Cabinet />
      <HudPanel />
      <p className="absolute left-[165px] top-[27px] font-['Noto_Sans',sans-serif] text-[21px] font-bold leading-[25px] text-[#fb3b4f]">
        Nhận thiết kế A -Z mọi lĩnh vực
        <br />
        0792 403 279 Zalo.
      </p>
      <HudButtons />
      <div className="absolute left-[1345px] top-[75px]">
        <FloatingPanel title="" />
      </div>
      <div className="absolute left-[1207px] top-[82px]">
        <FloatingPanel title="Keyframe Animation" tools={KEYFRAME_TOOLS} />
      </div>
      <div className="absolute left-[1462px] top-[16px]">
        <FloatingPanel
          title="..."
          tools={[
            {
              label: "Orbit views",
              art: (
                <g>
                  <circle cx="11" cy="12" r="8" stroke={NAVY} strokeWidth="1.800" />
                  <path d="M3 0l5 3-4 3zM20 9l5 3-5 3zM3 19l5 3-5 3z" fill={NAVY} />
                </g>
              ),
            },
          ]}
        />
      </div>
      <div className="absolute left-[1479px] top-[760px]">
        <FloatingPanel
          title="..."
          tools={[
            {
              label: "Section box",
              art: (
                <g>
                  <path d="M6 10l3 12 5 3 9-6V8l-5-3-8 1z" fill="#3e3222" />
                  <path d="M8 11l8 2v11l-6-4z" fill="#8d7a5a" />
                  <path d="M7 10l5-5 8 2-4 6z" fill="#fbe7b0" />
                  <rect x="-1" y="0" width="12" height="18" rx="1" stroke="#f05050" />
                  <path d="M3 9h4v3H3zM6 5h3v3H6z" fill={RED} />
                </g>
              ),
            },
          ]}
        />
      </div>
    </main>
  );
}

function HudPanel() {
  const [seeThrough, setSeeThrough] = useState(false);
  const [thickness, setThickness] = useState(3);

  return (
    <section className="absolute left-[28px] top-[21px] font-['DejaVu_Sans_Condensed','DejaVu_Sans',sans-serif] text-[10px] leading-4 text-[#66614e]">
      <label className="flex h-[18px] items-center gap-[9px] font-bold">
        <input
          type="checkbox"
          checked={seeThrough}
          onChange={(e) => setSeeThrough(e.target.checked)}
          className="h-[14px] w-[14px] appearance-none rounded-[2px] border border-[#77756a] bg-white checked:bg-[#66614e]"
        />
        Nhìn xuyên (nhấn ~)
      </label>
      <div className="relative mt-[18px] flex h-4 w-[160px] items-center">
        <span className="flex h-4 w-4 items-center justify-center border border-[#807f78] bg-[#e9e9e9]">{thickness}</span>
        <span className="h-[2px] flex-1 bg-[#e1e1e1]" />
        <input
          type="range"
          min={1}
          max={30}
          value={thickness}
          onChange={(e) => setThickness(Number(e.target.value))}
          aria-label="Thickness"
          className="absolute inset-0 w-full opacity-0"
        />
      </div>
      <ul className="mt-[3px] pl-[3px]">
        {LAYERS.map((layer) => (
          <li key={layer.name} className="flex h-[25px] items-center">
            <span className={layer.swatch} />
            <span className={`pl-[7px] ${layer.text}`}>{layer.name}</span>
          </li>
        ))}
      </ul>
    </section>
  );
}

function HudButtons() {
  return (
    <div className="absolute left-[690px] top-[15px] flex gap-20">
      <button type="button" aria-label="Solid face" className="flex h-[30px] w-20 items-center justify-center bg-[#ebebeb]">
        <span className="h-[18px] w-6 border border-black bg-white" />
      </button>
      <button type="button" aria-label="Dashed face" className="flex h-[30px] w-20 items-center justify-center bg-[#ebebeb]">
        <svg width="24" height="18" fill="#fff" stroke="#b3b3b3" aria-hidden>
          <path d="M1 1h22v16H1z" strokeWidth="1.500" strokeDasharray="3 2" />
        </svg>
      </button>
      <button type="button" aria-label="Red face" className="flex h-[30px] w-20 items-center justify-center bg-[#ebebeb]">
        <span className="h-[18px] w-[18px] border border-[#c00000] bg-white" />
      </button>
      <button type="button" aria-label="Face settings" className="flex h-[30px] w-[30px] items-center justify-center rounded-[3px] bg-[#ebebeb]">
        <svg width="14" height="14" fill="none" stroke="#000" aria-hidden>
          <circle cx="7" cy="7" r="4" strokeWidth="2" />
          <path d="M7 0v3M7 11v3M0 7h3M11 7h3M2 2l2 2M10 10l2 2M12 2l-2 2M4 10l-2 2" strokeWidth="2" />
        </svg>
      </button>
    </div>
  );
}

function FloatingPanel({ title, tools = [] }: { title: string; tools?: Tool[] }) {
  return (
    <section className="min-w-[37px] border border-[#d9d8e4] bg-[#f1f0f5] p-px">
      <div className="flex h-5 items-center justify-between border border-[#b4b4bb] bg-[#9cb4d0] pl-[3px] pr-1 text-[12px] leading-4 text-[#44474f]">
        <h2 className="font-bold">{title}</h2>
        {title ? (
          <button type="button" aria-label="Close" className="flex h-4 w-2 items-center justify-center">
            <svg width="6" height="6" stroke="#44474f" aria-hidden>
              <path d="M0 0l6 6M6 0l-6 6" />
            </svg>
          </button>
        ) : null}
      </div>
      <div className="flex h-[34px] items-center">
        {tools.map((tool) => (
          <button key={tool.label} type="button" aria-label={tool.label} title={tool.label} className="flex h-8 w-8 items-center justify-center">
            <Icon size={24}>{tool.art}</Icon>
          </button>
        ))}
      </div>
    </section>
  );
}

// Stops of the wood texture: offset in percent, colour.
const WOOD: [number, string][] = [
  [0, "#6e3711"],
  [7, "#7d4424"],
  [13, "#8c5131"],
  [20, "#7a4424"],
  [26, "#85502c"],
  [35, "#6d3717"],
  [40, "#64300e"],
  [43, "#7f4827"],
  [51, "#874f2c"],
  [57, "#9a6039"],
  [60, "#763f22"],
  [66, "#854c2c"],
  [73, "#935a36"],
  [79, "#7e4627"],
  [85, "#8b5130"],
  [91, "#6b3619"],
  [96, "#824a29"],
  [100, "#6c3615"],
];

const PINK = "#fb1b63";

// x of each bay: front-left, back-left, back-right, front-right
const BAYS = [
  { fl: 662, bl: 686, br: 861, fr: 861 },
  { fl: 864, bl: 872, br: 1057, fr: 1062 },
];
const OPENINGS = [
  { top: 269, backTop: 291, backBottom: 366, bottom: 366 },
  { top: 380, backTop: 394, backBottom: 827, bottom: 848 },
];

function Cabinet() {
  return (
    <svg viewBox="640 240 440 640" className="absolute left-[571px] top-[90px] w-[440px]" fill="none" role="img" aria-label="Cabinet, front view">
      <defs>
        <linearGradient id="wood">
          {WOOD.map(([at, color]) => (
            <stop key={at} offset={`${at}%`} stopColor={color} />
          ))}
        </linearGradient>
        <linearGradient id="side">
          <stop offset="0" stopColor="#512e19" />
          <stop offset=".5" stopColor="#42230f" />
          <stop offset="1" stopColor="#53301b" />
        </linearGradient>
        <linearGradient id="ceiling" x2="1" y2=".3">
          <stop offset="0" stopColor="#56321e" />
          <stop offset=".6" stopColor="#432410" />
          <stop offset="1" stopColor="#533019" />
        </linearGradient>
        <linearGradient id="floor" x2="1" y2=".2">
          <stop offset="0" stopColor="#6e3815" />
          <stop offset=".5" stopColor="#884e2c" />
          <stop offset="1" stopColor="#713c1d" />
        </linearGradient>
        <filter id="grain" x="0" y="0" width="100%" height="100%" colorInterpolationFilters="sRGB">
          <feTurbulence type="fractalNoise" baseFrequency=".18 .002" numOctaves="3" seed="8" />
          <feColorMatrix values="0 0 0 0 .3  0 0 0 0 .11  0 0 0 0 .03  2 0 0 0 -.7" />
          <feComposite in2="SourceGraphic" operator="in" />
        </filter>
      </defs>

      <path d="M658 254h405v612H658z" fill="url(#wood)" />
      {OPENINGS.map((o) =>
        BAYS.map((b) => (
          <g key={`${o.top}-${b.fl}`}>
            <rect x={b.bl} y={o.backTop} width={b.br - b.bl} height={o.backBottom - o.backTop} fill="url(#wood)" />
            <rect x={b.bl} y={o.backTop} width={b.br - b.bl} height={o.backBottom - o.backTop} fill="#000" filter="url(#grain)" opacity=".6" />
            <g stroke="#120904">
              <path d={`M${b.fl} ${o.top}H${b.fr}L${b.br} ${o.backTop}H${b.bl}z`} fill="url(#ceiling)" />
              <path d={`M${b.fl} ${o.top}L${b.bl} ${o.backTop}V${o.backBottom}L${b.fl} ${o.bottom}z`} fill="url(#side)" />
              <path d={`M${b.fl} ${o.bottom}L${b.bl} ${o.backBottom}H${b.br}L${b.fr} ${o.bottom}z`} fill="url(#floor)" />
              <path d={`M${b.br} ${o.backTop}V${o.backBottom}`} />
            </g>
          </g>
        ))
      )}
      <path d="M685.500 394v433M1056.500 394v433" stroke="#a3153f" />

      {/* edge banding */}
      <path d="M659 267h3v599h-3zM1063 255h3v611h-3zM861 267h3v581h-3zM662 266h400v3H662zM662 377h400v3H662zM662 849h400v3H662z" fill={PINK} />
      <g stroke="#000">
        <path d="M658 254.500h408" stroke="#5a4a40" />
        <path d="M658.500 254v612M662.500 269v580M1062.500 254v612M860.500 269v108M860.500 380v468M864.500 269v108M864.500 380v468" />
        <path d="M658 265.500h408M662 269.500h400M658 370.500h408M658 376.500h408M662 380.500h400M658 852.500h408M658 866.500h408" />
        <path d="M1066.500 255v612" stroke="#666" />
      </g>
    </svg>
  );
}
